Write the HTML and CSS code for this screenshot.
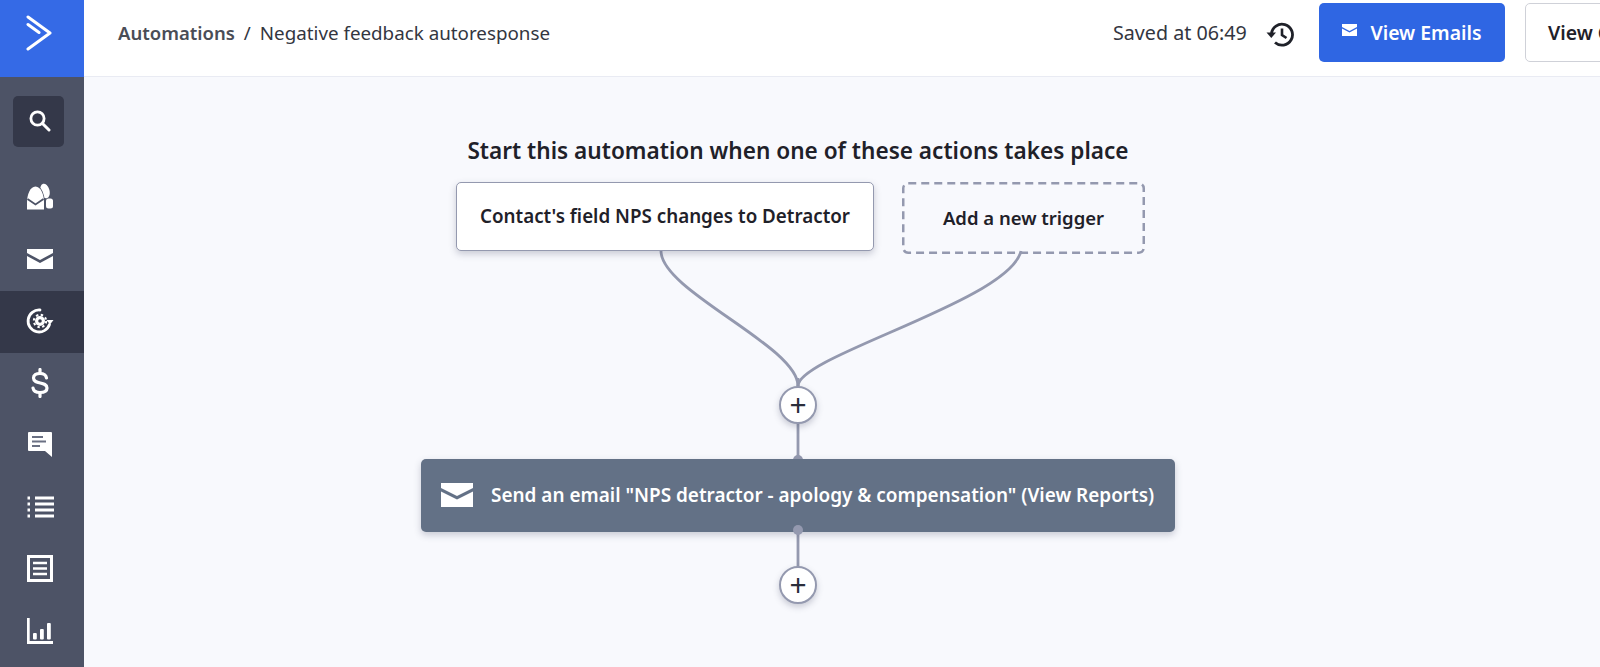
FILE: index.html
```html
<!DOCTYPE html>
<html lang="en">
<head>
<meta charset="utf-8">
<title>Negative feedback autoresponse</title>
<link rel="stylesheet" href="styles.css">
</head>
<body>
<div class="app">
  <aside class="sidebar">
    <div class="logo">
      <svg width="26" height="36" viewBox="0 0 26 36"><path d="M2 2 L24 18 L2 34" fill="none" stroke="#fff" stroke-width="3" stroke-linecap="round" stroke-linejoin="round"/><path d="M2 9.500 L13 17.500" fill="none" stroke="#fff" stroke-width="3" stroke-linecap="round"/></svg>
    </div>
    <div class="search-wrap">
      <div class="search">
        <svg width="24" height="24" viewBox="0 0 24 24"><circle cx="10.500" cy="10.500" r="6.600" fill="none" stroke="#fff" stroke-width="2.800"/><path d="M15.500 15.500 L22 22" stroke="#fff" stroke-width="3" stroke-linecap="round"/></svg>
      </div>
    </div>
    <nav class="nav">
      <div class="nav-item">
        <svg width="28" height="28" viewBox="0 0 28 28"><ellipse cx="19" cy="8" rx="4.500" ry="7.500" transform="rotate(-15 19 8)" fill="#fff"/><rect x="20" y="15.500" width="7" height="10" rx="2.500" fill="#fff"/><path d="M1 26.500 V19 C1 12 4 3.500 9.500 3.500 C15 3.500 18 12 18 19 V26.500 Z" fill="#fff" stroke="#4d5366" stroke-width="1.500" paint-order="stroke"/><path d="M1.500 16 L9.500 21.500 L17.500 16" fill="none" stroke="#4d5366" stroke-width="1.800"/></svg>
      </div>
      <div class="nav-item">
        <svg width="28" height="22" viewBox="0 0 28 22"><path d="M1 1 H27 V5 L14 12 L1 5 Z" fill="#fff"/><path d="M1 8 L14 15 L27 8 V21 H1 Z" fill="#fff"/></svg>
      </div>
      <div class="nav-item active">
        <svg width="28" height="28" viewBox="0 0 28 28"><path d="M23.500 17.500 A11 11 0 1 1 14 3" fill="none" stroke="#fff" stroke-width="2.800" stroke-linecap="round"/><path d="M20.500 13 L24 17.500 L27.500 13 Z" fill="#fff"/><circle cx="14" cy="14" r="5" fill="#fff"/><circle cx="14" cy="14" r="6.200" fill="none" stroke="#fff" stroke-width="2" stroke-dasharray="2.400 2.470"/><circle cx="14" cy="14" r="1.800" fill="#343849"/></svg>
      </div>
      <div class="nav-item">
        <svg width="20" height="30" viewBox="0 0 20 30"><path d="M16.500 10 C16 7 14 5.500 10 5.500 C6 5.500 3.500 7 3.500 10 C3.500 17 17 13 17 20 C17 23 14 24.500 10 24.500 C6 24.500 3.500 23 3 20" fill="none" stroke="#fff" stroke-width="3.200" stroke-linecap="round"/><path d="M10 1.500 V5 M10 25 V28.500" stroke="#fff" stroke-width="3.200" stroke-linecap="round"/></svg>
      </div>
      <div class="nav-item">
        <svg width="26" height="27" viewBox="0 0 26 27"><path d="M2 1 H24 A1 1 0 0 1 25 2 V26 L18 20 H2 A1 1 0 0 1 1 19 V2 A1 1 0 0 1 2 1 Z" fill="#fff"/><path d="M5 6 H16 M5 10.500 H19 M5 15 H13" stroke="#6a7083" stroke-width="2.200"/></svg>
      </div>
      <div class="nav-item">
        <svg width="27" height="22" viewBox="0 0 27 22"><path d="M8 2 H27 M8 8 H27 M8 14 H27 M8 20 H27" stroke="#fff" stroke-width="2.800"/><path d="M0.500 2 H3 M0.500 8 H3 M0.500 14 H3 M0.500 20 H3" stroke="#fff" stroke-width="2.800"/></svg>
      </div>
      <div class="nav-item">
        <svg width="26" height="27" viewBox="0 0 26 27"><rect x="1.500" y="1.500" width="23" height="24" fill="none" stroke="#fff" stroke-width="3"/><path d="M6 8 H20 M6 13.500 H20 M6 19 H20" stroke="#fff" stroke-width="2.600"/></svg>
      </div>
      <div class="nav-item">
        <svg width="26" height="26" viewBox="0 0 26 26"><path d="M1.300 0 V24.500 H26" fill="none" stroke="#fff" stroke-width="2.800"/><rect x="6" y="15" width="3.800" height="6.500" rx="1" fill="#fff"/><rect x="13" y="11" width="3.800" height="10.500" rx="1" fill="#fff"/><rect x="20" y="5" width="3.800" height="16.500" rx="1" fill="#fff"/></svg>
      </div>
    </nav>
  </aside>
  <div class="main">
    <header class="topbar">
      <div class="crumbs">
        <span class="crumb-link">Automations</span>
        <span class="crumb-sep">/</span>
        <span class="crumb-page">Negative feedback autoresponse</span>
      </div>
      <div class="actions">
        <span class="saved">Saved at 06:49</span>
        <svg class="history" width="30" height="28" viewBox="0 0 30 28"><path d="M6.500 14 A10.500 10.500 0 1 1 10 22.500" fill="none" stroke="#1f2129" stroke-width="2.800"/><path d="M1.500 12.500 H11 L6.300 18 Z" fill="#1f2129"/><path d="M17 8.500 V15 L21.500 18" fill="none" stroke="#1f2129" stroke-width="2.600"/></svg>
        <button class="btn btn-primary">
          <svg class="btn-icon" width="15" height="12" viewBox="0 0 15 12"><path d="M0 0 H15 V3 L7.500 7 L0 3 Z" fill="#fff"/><path d="M0 4.500 L7.500 8.500 L15 4.500 V12 H0 Z" fill="#fff"/></svg>
          View Emails
        </button>
        <button class="btn btn-default">View Contacts</button>
      </div>
    </header>
    <section class="canvas">
      <svg class="wires" width="1516" height="590" viewBox="0 1 1516 590">
        <g fill="none" stroke="#9499af" stroke-width="2.800">
          <path d="M577 175 C577 215 714 270 714 310"/>
          <path d="M937 175 C925 225 714 280 714 310"/>
          <path d="M714 302 V320"/>
          <path d="M714 340 V384"/>
          <path d="M714 454 V500"/>
        </g>
      </svg>
      <h1 class="heading">Start this automation when one of these actions takes place</h1>
      <div class="node trigger">Contact's field NPS changes to Detractor</div>
      <div class="node trigger-add">
        <svg class="dash-frame" width="243" height="72" viewBox="0 0 243 72"><rect x="1.250" y="1.250" width="240.500" height="69.500" rx="5" fill="none" stroke="#9499af" stroke-width="2.500" stroke-dasharray="8 5"/></svg>
        Add a new trigger
      </div>
      <button class="plus plus-top">+</button>
      <span class="dot dot-in"></span>
      <div class="node email">
        <svg width="32" height="24" viewBox="0 0 32 24"><path d="M0 0 H32 V5 L16 13 L0 5 Z" fill="#fff"/><path d="M0 8.500 L16 16.500 L32 8.500 V24 H0 Z" fill="#fff"/></svg>
        <span class="email-label">Send an email "NPS detractor - apology &amp; compensation" (View Reports)</span>
      </div>
      <span class="dot dot-out"></span>
      <button class="plus plus-bottom">+</button>
    </section>
  </div>
</div>
</body>
</html>
```
FILE: styles.css
```css
* { box-sizing: border-box; }
html, body { margin: 0; height: 100%; overflow: hidden; }
body { font-family: "Noto Sans", "Open Sans", sans-serif; color: #1f2129; background: #f8f9fd; }

.app { display: flex; width: 1600px; height: 667px; overflow: hidden; }

.sidebar { flex: 0 0 84px; background: #4d5366; display: flex; flex-direction: column; }
.logo { height: 77px; background: #356ae6; display: flex; align-items: center; justify-content: center; padding: 0 6px 12px 0; }
.search-wrap { padding: 19px 20px 20px 13px; }
.search { width: 51px; height: 51px; border-radius: 5px; background: #343849; display: flex; align-items: center; justify-content: center; padding-bottom: 3px; }
.nav { display: flex; flex-direction: column; }
.nav-item { height: 62px; display: flex; align-items: center; justify-content: center; padding: 0 4px 3px 0; }
.nav-item.active { background: #343849; }

.main { flex: 1; display: flex; flex-direction: column; min-width: 0; }
.topbar { height: 77px; background: #fff; border-bottom: 1px solid #e9ebf3; display: flex; align-items: flex-start; justify-content: space-between; padding: 3px 0 0 34px; }
.crumbs { display: flex; align-items: center; height: 59px; font-size: 18.800px; color: #33363f; }
.crumb-link { font-size: 18.500px; font-weight: 600; color: #4a4d56; }
.crumb-sep { margin: 0 9px; }
.actions { display: flex; align-items: center; height: 59px; width: 487px; flex: 0 0 487px; overflow: hidden; }
.saved { font-size: 19.700px; color: #33363f; white-space: nowrap; width: 133px; flex: none; }
.history { margin: 2px 0 0 19px; flex: none; }
.btn { height: 59px; border-radius: 5px; font-family: inherit; font-size: 19.400px; font-weight: 600; display: flex; align-items: center; white-space: nowrap; flex: none; padding: 0; }
.btn-primary { width: 186px; margin-left: 24px; background: #2f66e3; border: 0; color: #fff; justify-content: center; gap: 13px; }
.btn-icon { margin-top: -5px; }
.btn-default { width: 200px; margin-left: 20px; background: #fff; border: 1px solid #cfd1d8; color: #1f2129; padding-left: 22px; }

.canvas { position: relative; flex: 1; background: #f8f9fd; }
.wires { position: absolute; left: 0; top: 0; }
.heading { position: absolute; left: 300px; top: 58px; width: 828px; margin: 0; text-align: center; font-size: 22.600px; line-height: 32px; font-weight: 600; color: #1f2129; }
.node { position: absolute; display: flex; align-items: center; justify-content: center; font-weight: 600; font-size: 18.800px; border-radius: 5px; padding-bottom: 2px; }
.trigger { left: 372px; top: 105px; width: 418px; height: 69px; background: #fff; border: 1px solid #9499af; box-shadow: 0 3px 7px rgba(60, 65, 90, 0.25); }
.trigger-add { left: 818px; top: 105px; width: 243px; height: 72px; font-size: 18.500px; }
.dash-frame { position: absolute; left: 0; top: 0; }
.email { left: 337px; top: 382px; width: 754px; height: 73px; background: #637186; color: #fff; justify-content: flex-start; padding-left: 20px; gap: 18px; box-shadow: 0 3px 7px rgba(60, 65, 90, 0.25); }
.email-label { font-size: 18.950px; white-space: nowrap; }
.plus { position: absolute; left: 695px; width: 38px; height: 38px; padding: 0; border-radius: 50%; border: 2px solid #9499af; background: #fff; color: #2b2e3b; font: 400 30px/30px "Noto Sans", sans-serif; display: flex; align-items: center; justify-content: center; box-shadow: 0 3px 6px rgba(60, 65, 90, 0.25); }
.plus-top { top: 309px; }
.plus-bottom { top: 489px; }
.dot { position: absolute; left: 709px; width: 10px; height: 10px; border-radius: 50%; background: #9499af; }
.dot-in { top: 378px; }
.dot-out { top: 448px; }
```
